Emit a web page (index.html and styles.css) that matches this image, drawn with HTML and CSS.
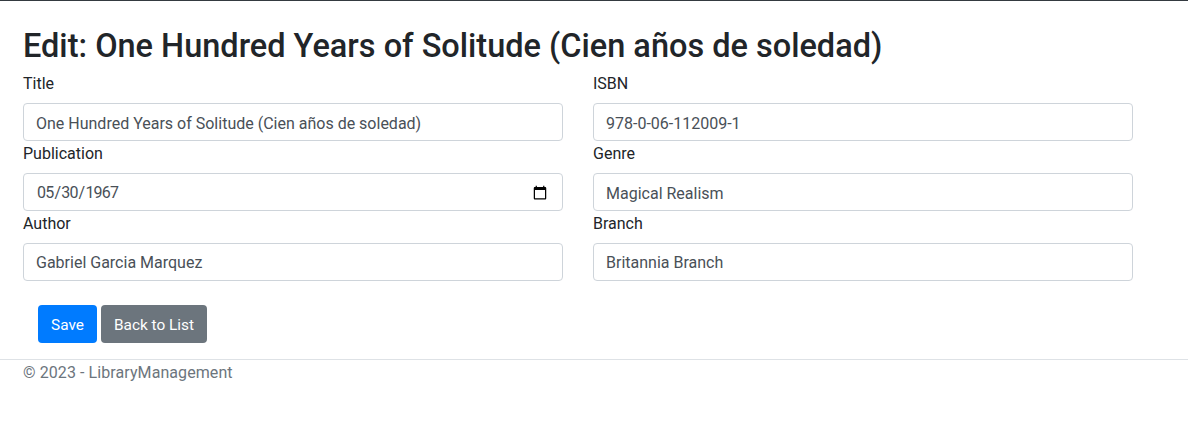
FILE: index.html
```html
<!DOCTYPE html>
<html lang="en">
<head>
  <meta charset="UTF-8" />
  <title>Edit - LibraryManagement</title>
  <link rel="stylesheet" href="styles.css">
</head>
<body>
  <div class="container">
    <h1>Edit: One Hundred Years of Solitude (Cien años de soledad)</h1>
    <form class="edit-form">
      <div class="field-grid">
        <div class="field">
          <label for="title">Title</label>
          <input id="title" class="form-control" type="text" value="One Hundred Years of Solitude (Cien años de soledad)">
        </div>
        <div class="field">
          <label for="isbn">ISBN</label>
          <input id="isbn" class="form-control" type="text" value="978-0-06-112009-1">
        </div>
        <div class="field">
          <label for="publication">Publication</label>
          <input id="publication" class="form-control" type="date" value="1967-05-30">
        </div>
        <div class="field">
          <label for="genre">Genre</label>
          <input id="genre" class="form-control" type="text" value="Magical Realism">
        </div>
        <div class="field">
          <label for="author">Author</label>
          <input id="author" class="form-control" type="text" value="Gabriel Garcia Marquez">
        </div>
        <div class="field">
          <label for="branch">Branch</label>
          <input id="branch" class="form-control" type="text" value="Britannia Branch">
        </div>
      </div>
      <div class="actions">
        <button type="button" class="btn btn-primary">Save</button>
        <button type="button" class="btn btn-secondary">Back to List</button>
      </div>
    </form>
  </div>
  <footer class="footer">
    <div class="container">© 2023 - LibraryManagement</div>
  </footer>
</body>
</html>
```

FILE: styles.css
```css
* {
  box-sizing: border-box;
}

body {
  font-family: "Segoe UI", Roboto, "Noto Sans", sans-serif;
  font-size: 16px;
  line-height: 24px;
  color: #212529;
  margin: 0;
  background: #fff;
  border-top: 1px solid #343a40;
}

.container {
  padding: 0 23px;
}

h1 {
  font-size: 32.5px;
  font-weight: 500;
  line-height: 39px;
  margin: 0;
  padding-top: 26px;
  padding-bottom: 5px;
}

.field-grid {
  display: grid;
  grid-template-columns: 540px 540px;
  column-gap: 30px;
}

.field {
  height: 70px;
}

label {
  display: block;
  padding-top: 1px;
  margin-bottom: 7px;
}

.form-control {
  display: block;
  width: 100%;
  height: 38px;
  padding: 7px 12px 5px;
  font: inherit;
  color: #495057;
  background: #fff;
  border: 1px solid #ced4da;
  border-radius: 4px;
}

.field:nth-last-child(-n+2) .form-control {
  padding-top: 6px;
  padding-bottom: 6px;
}

.form-control::-webkit-datetime-edit {
  letter-spacing: -0.8px;
}

.actions {
  display: flex;
  gap: 4px;
  padding: 24px 15px 16px;
}

.btn {
  height: 38px;
  padding: 7px 12px 5px;
  font: inherit;
  font-size: 15.4px;
  color: #fff;
  border: 1px solid transparent;
  border-radius: 4px;
}

.btn-primary {
  background: #007bff;
}

.btn-secondary {
  background: #6c757d;
}

.footer {
  border-top: 1px solid #dee2e6;
  padding-top: 1px;
  color: #6c757d;
  letter-spacing: 0.08px;
}
```
